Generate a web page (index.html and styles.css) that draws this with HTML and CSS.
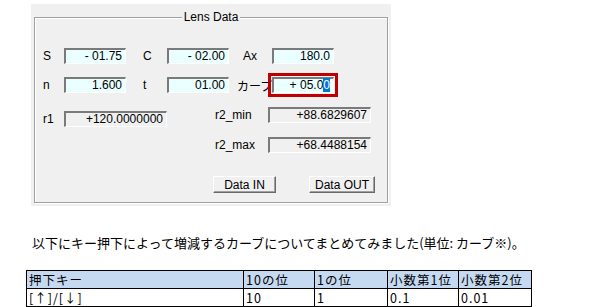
FILE: index.html
```html
<!DOCTYPE html>
<html lang="ja">

<head>
  <meta charset="UTF-8" />
  <title>Lens Data</title>
  <link rel="stylesheet" href="styles.css">
</head>

<body>
  <div class="panel">
    <div class="group">
      <span class="group-title">Lens Data</span>

      <div class="row">
        <span class="lbl lbl-first">S</span>
        <div class="field">- 01.75</div>
        <span class="lbl lbl-c">C</span>
        <div class="field">- 02.00</div>
        <span class="lbl lbl-ax">Ax</span>
        <div class="field">180.0</div>
      </div>

      <div class="row row-2">
        <span class="lbl lbl-first">n</span>
        <div class="field">1.600</div>
        <span class="lbl lbl-c">t</span>
        <div class="field">01.00</div>
        <span class="lbl lbl-curve">カーブ</span>
        <div class="field focused">+ 05.0<span class="sel">0</span></div>
      </div>

      <div class="lower">
        <div class="row r1">
          <span class="lbl lbl-first">r1</span>
          <div class="field wide readonly">+120.0000000</div>
        </div>
        <div class="right">
          <div class="row">
            <span class="lbl lbl-r2">r2_min</span>
            <div class="field wide readonly">+88.6829607</div>
          </div>
          <div class="row row-r2max">
            <span class="lbl lbl-r2">r2_max</span>
            <div class="field wide readonly">+68.4488154</div>
          </div>
          <div class="buttons">
            <button class="btn btn-in">Data IN</button>
            <button class="btn btn-out">Data OUT</button>
          </div>
        </div>
      </div>
    </div>
  </div>

  <p class="note">以下にキー押下によって増減するカーブについてまとめてみました(単位: カーブ※)。</p>

  <table class="keys">
    <tr class="head">
      <td class="c1">押下キー</td>
      <td class="c2">10の位</td>
      <td class="c3">1の位</td>
      <td class="c4">小数第1位</td>
      <td class="c5">小数第2位</td>
    </tr>
    <tr>
      <td>[↑]/[↓]</td>
      <td>10</td>
      <td>1</td>
      <td>0.1</td>
      <td>0.01</td>
    </tr>
  </table>
</body>

</html>
```

FILE: styles.css
```css
* {
  margin: 0;
  padding: 0;
  box-sizing: border-box;
}

body {
  background: #fff;
  color: #000;
  font-family: 'Liberation Sans', 'Noto Sans CJK JP', sans-serif;
}

/* Dialog panel */
.panel {
  margin: 4px 0 0 31px;
  width: 360px;
  height: 202px;
  background: #f0f0f0;
  padding: 13px 3px 3px 3px;
  font-size: 12px;
}

.group {
  position: relative;
  height: 186px;
  border: 1px solid #a0a0a0;
  box-shadow: inset 1px 1px 0 #fff, 1px 1px 0 #fff;
  padding: 30px 0 0 8px;
}

.group-title {
  position: absolute;
  top: -8px;
  left: 0;
  right: 0;
  margin: 0 auto;
  width: 58px;
  text-align: center;
  background: #f0f0f0;
  line-height: 14px;
}

.row {
  display: flex;
  align-items: center;
  height: 16px;
}

.row-2 {
  margin-top: 13px;
}

.lbl {
  white-space: nowrap;
}

.lbl-first {
  width: 21px;
}

.lbl-c {
  width: 41px;
  padding-left: 17px;
}

.lbl-ax {
  width: 43px;
  padding-left: 14px;
}

.lbl-curve {
  width: 43px;
  padding-left: 8px;
  font-family: 'Noto Sans CJK JP', sans-serif;
  font-size: 12px;
}

.field {
  width: 62px;
  height: 16px;
  background: #eaffff;
  border-top: 2px solid #7a7a7a;
  border-left: 2px solid #7a7a7a;
  border-right: 1px solid #fff;
  border-bottom: 1px solid #fff;
  text-align: right;
  padding-right: 3px;
  line-height: 13px;
  font-size: 12px;
}

.field.wide {
  width: 103px;
}

.field.readonly {
  background: #f0f0f0;
}

.field.focused {
  outline: 3px solid #c00000;
  outline-offset: 1px;
}

.sel {
  background: #0078d7;
  color: #fff;
}

.lower {
  display: flex;
  margin-top: 14px;
}

.r1 {
  margin-top: 4px;
}

.right {
  margin-left: 46px;
}

.lbl-r2 {
  width: 55px;
  padding-left: 2px;
}

.row-r2max {
  margin-top: 14px;
}

.buttons {
  display: flex;
  gap: 33px;
  margin-top: 23px;
}

.btn {
  height: 17px;
  font-family: 'Liberation Sans', sans-serif;
  font-size: 12px;
  background: #f0f0f0;
  border: 1px solid;
  border-color: #fff #696969 #696969 #fff;
  box-shadow: inset -1px -1px 0 #a0a0a0;
  color: #000;
}

.btn-in {
  width: 63px;
}

.btn-out {
  width: 66px;
}

/* Explanation */
.note {
  margin: 28px 0 0 32px;
  font-family: 'Noto Sans CJK JP', sans-serif;
  font-size: 13px;
  line-height: 18px;
}

.keys {
  margin: 18px 0 0 26px;
  border-collapse: collapse;
  font-family: 'Noto Sans CJK JP', sans-serif;
  font-size: 12.5px;
  letter-spacing: 1px;
}

.keys td {
  border: 1px solid #000;
  height: 18px;
  line-height: 16px;
  padding: 0 0 0 2px;
  white-space: nowrap;
}

.keys .head td {
  background: #c5d9f1;
}

.c1 { width: 217px; }
.c2 { width: 71px; }
.c3 { width: 73px; }
.c4 { width: 71px; }
.c5 { width: 73px; }
```
